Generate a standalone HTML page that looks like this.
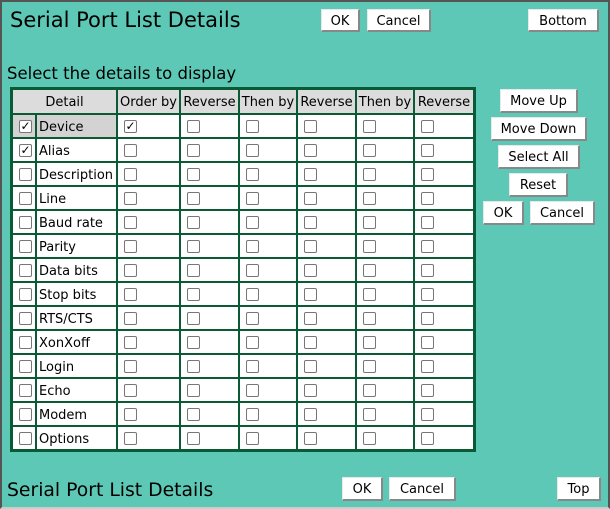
<!DOCTYPE html><html><head><style>
*{box-sizing:border-box;margin:0;padding:0}
body{width:610px;height:509px;background:#5ec8b6;font-family:"DejaVu Sans","Liberation Sans",sans-serif;position:relative;overflow:hidden;color:#000}
.frame{position:absolute;left:0;top:0;width:610px;height:509px;border:2px solid #555;border-bottom:2px solid #ccc}
.t{position:absolute;white-space:nowrap}
.b{position:absolute;background:#fff;border:1px solid #e8e8e8;border-right:2px solid #888;border-bottom:2px solid #888;font-size:13px;text-align:center;line-height:23px}
.grid{position:absolute;left:10px;top:87px;width:466px;background:#0b5a36;padding:3px;display:grid;grid-template-columns:22px 79px 61px 57px 56px 57px 56px 58px;grid-auto-rows:22px;grid-template-rows:23px;gap:2px}
.grid div{background:#fff;font-size:13px;line-height:25px;position:relative}
.grid .h{background:#dcdcdc;text-align:center;line-height:25px}
.grid .g{background:#d3d3d3}
.cb{position:absolute;left:6px;top:5px;width:13px;height:13px;border:1px solid #777;border-radius:2px;background:#fff;font-size:12px;line-height:11px;text-align:center;font-weight:bold}
.lbl{padding-left:2px}
</style></head><body><div class="frame"></div>
<div class="t" style="left:10px;top:8px;font-size:21px">Serial Port List Details</div>
<div class="b" style="left:321px;top:9px;width:39px;height:23px">OK</div>
<div class="b" style="left:367px;top:9px;width:64px;height:23px">Cancel</div>
<div class="b" style="left:528px;top:9px;width:71px;height:23px">Bottom</div>
<div class="t" style="left:7px;top:64px;font-size:16.5px">Select the details to display</div>
<div class="grid" id="g">
<div class="h" style="grid-column:span 2">Detail</div><div class="h">Order by</div><div class="h">Reverse</div><div class="h">Then by</div><div class="h">Reverse</div><div class="h">Then by</div><div class="h">Reverse</div>
</div>
<div class="b" style="left:500px;top:89px;width:78px;height:24px">Move Up</div>
<div class="b" style="left:491px;top:117px;width:96px;height:24px">Move Down</div>
<div class="b" style="left:498px;top:145px;width:82px;height:24px">Select All</div>
<div class="b" style="left:509px;top:173px;width:59px;height:24px">Reset</div>
<div class="b" style="left:483px;top:201px;width:41px;height:24px">OK</div>
<div class="b" style="left:530px;top:201px;width:65px;height:24px">Cancel</div>
<div class="t" style="left:7px;top:480px;font-size:18.8px">Serial Port List Details</div>
<div class="b" style="left:342px;top:477px;width:41px;height:24px">OK</div>
<div class="b" style="left:389px;top:477px;width:67px;height:24px">Cancel</div>
<div class="b" style="left:557px;top:477px;width:44px;height:24px">Top</div>
<script>
var names=["Device","Alias","Description","Line","Baud rate","Parity","Data bits","Stop bits","RTS/CTS","XonXoff","Login","Echo","Modem","Options"];
var g=document.getElementById("g"),h="";
names.forEach(function(n,i){
 var gc=i==0?' class="g"':'';
 h+='<div'+gc+'><span class="cb">'+(i<2?'✓':'')+'</span></div><div'+gc+'><span class="lbl">'+n+'</span></div>';
 for(var c=0;c<6;c++)h+='<div><span class="cb">'+(i==0&&c==0?'✓':'')+'</span></div>';
});
g.innerHTML+=h;
</script>
</body></html>
